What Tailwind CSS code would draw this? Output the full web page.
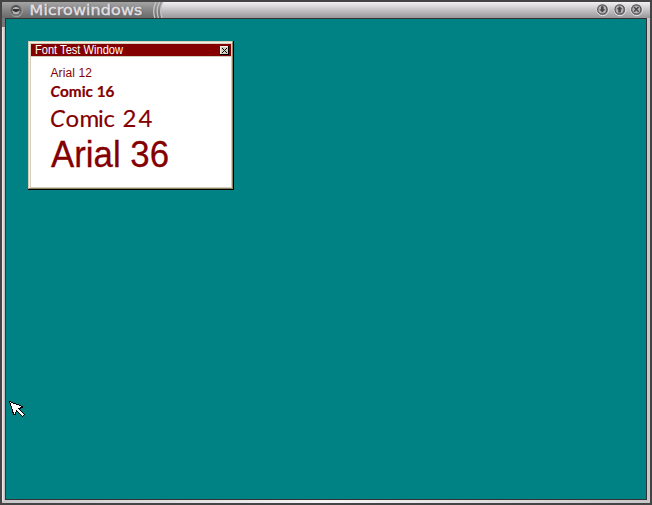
<!DOCTYPE html>
<html lang="en"><head><meta charset="utf-8"><title>Microwindows</title>
<script src="https://cdn.jsdelivr.net/npm/@tailwindcss/browser@4"></script></head>
<body class="w-[652px] h-[505px] overflow-hidden bg-[#444444]">
<main class="relative w-[652px] h-[505px] flex flex-col border-2 border-[#444444] bg-[#e6e2e6] overflow-hidden">
<header class="h-4 shrink-0 flex bg-linear-to-b from-[#f2f0f2] to-[#999799]">
<div class="w-[151px] h-4 flex items-center bg-linear-to-b from-[#a5a5a5] via-[#858585] to-[#696969]">
<svg class="ml-[7px] w-[15px] h-[15px]" viewBox="0 0 15 15"><circle cx="7.4" cy="7.9" r="6.3" fill="#a9a9a9"/><circle cx="7" cy="7.5" r="6.1" fill="#777"/><circle cx="7" cy="7.3" r="4.7" fill="#4a4a4a"/><circle cx="7" cy="7.8" r="3.7" fill="#b5b5b5"/><path d="M3.7 6h6.6v1.7L7 9.3 3.7 7.7z" fill="#333"/></svg>
<svg class="ml-1 w-[120px] h-4" viewBox="0 0 120 16"><text x="2.3" y="13.2" textLength="113" lengthAdjust="spacingAndGlyphs" font-family="DejaVu Sans, sans-serif" font-size="13.5" fill="#555">Microwindows</text><text x="1.5" y="12.5" textLength="113" lengthAdjust="spacingAndGlyphs" font-family="DejaVu Sans, sans-serif" font-size="13.5" fill="#e4e0e4" stroke="#e4e0e4" stroke-width=".35">Microwindows</text></svg>
</div>
<svg class="w-3 h-4" viewBox="0 0 12 16"><defs><linearGradient id="dark" x2="0" y2="1"><stop stop-color="#a0a0a0"/><stop offset="1" stop-color="#6b6b6b"/></linearGradient></defs><path d="M0 0h10Q6 8 9 16H0z" fill="url(#dark)"/><path d="M3 0Q-1 8 2 16M6.5 0Q2.5 8 5.5 16M10 0Q6 8 9 16" fill="none" stroke="#c9c7c9" stroke-width="1.3"/></svg>
<div class="flex-1"></div>
<svg class="w-[53px] h-4 mr-[2px]" viewBox="0 0 53 16"><g fill="#858385" stroke="#e5e3e5"><circle cx="7.7" cy="7.9" r="5.8"/><circle cx="25" cy="7.9" r="5.8"/><circle cx="41.7" cy="7.9" r="5.8"/></g><g fill="#b5b3b5" stroke="#555" stroke-width="1.2"><circle cx="7.3" cy="7.4" r="4.6"/><circle cx="24.6" cy="7.4" r="4.6"/><circle cx="41.3" cy="7.4" r="4.6"/></g><g fill="#484848"><path d="M6 4.2h2.6v3.1h1.7L7.3 10.4 4.3 7.3H6zM23.3 10.4h2.6V7.3h1.7l-3-3.1-3 3.1h1.7z"/><path d="m39 5.1 4.6 4.6M43.6 5.1 39 9.7" stroke="#484848" stroke-width="1.4"/></g></svg>
</header>
<div class="flex-1 flex bg-linear-to-r from-[#c8c6c8] via-[#f5f3f5] to-[#c8c6c8] pb-[2px]">
<div class="w-[3px] shrink-0 bg-linear-to-r from-[#f5f2f5] to-[#b9b5b9]"><div class="h-[9px] bg-[#777777]"></div></div>
<section class="w-[642px] h-[482px] shrink-0 border border-[#333333] bg-[#008284] pl-[22px] pt-[22px]">
<div class="w-[206px] h-[149px] border-r border-b border-black bg-[#d6cebd]">
<div class="h-full border border-t-[#d6cebd] border-l-[#d6cebd] border-r-[#8c8163] border-b-[#8c8163]">
<div class="h-full border-t border-l border-[#f5f1e5] pt-px pl-px pr-px pb-px flex flex-col">
<div class="h-3 shrink-0 bg-[#840000] flex items-center justify-between pr-[2px]">
<svg class="w-[110px] h-3 shrink-0" viewBox="0 0 110 12"><text x="4" y="10" textLength="88" lengthAdjust="spacingAndGlyphs" font-family="Liberation Sans, sans-serif" font-size="12" fill="#fff">Font Test Window</text></svg>
<svg class="w-[9px] h-[9px]" viewBox="0 0 9 9" shape-rendering="crispEdges"><path d="M0 0h9v9H0z" fill="#000"/><path d="M0 0h8v8H0z" fill="#f5f1e5"/><path d="M1 1h7v7H1z" fill="#d6cebd"/><path d="M2 2h1v1H2zM6 2h1v1H6zM3 3h1v1H3zM5 3h1v1H5zM4 4h1v1H4zM3 5h1v1H3zM5 5h1v1H5zM2 6h1v1H2zM6 6h1v1H6z" fill="#000"/></svg>
</div>
<div class="flex-1 mt-px bg-white overflow-hidden">
<svg class="w-[198px] h-[129px]" viewBox="31 57 198 129" fill="#840000"><text x="50.5" y="77" textLength="41.5" lengthAdjust="spacing" font-family="Liberation Sans, sans-serif" font-size="12">Arial 12</text><text x="50.5" y="97" textLength="64" lengthAdjust="spacingAndGlyphs" font-family="Lato, sans-serif" font-size="15.5" font-weight="700" stroke="#840000" stroke-width=".2"><tspan font-style="italic">C</tspan>omic 16</text><text x="50 65.5 79.5 98 103.5 115 122.5 138.5" y="127" font-family="Lato, sans-serif" font-size="24" stroke="#840000" stroke-width=".15"><tspan font-style="italic">C</tspan>omic 24</text><text x="51" y="167" textLength="118" lengthAdjust="spacingAndGlyphs" font-family="Liberation Sans, sans-serif" font-size="36" stroke="#840000" stroke-width=".3">Arial 36</text></svg>
</div></div></div></div>
</section></div>
<svg class="absolute left-[7px] top-[399px] w-[17px] h-[17px]" viewBox="0 0 17 17" shape-rendering="crispEdges"><path d="M.5.5 13.5 5.5v1l-4 1 6 6-2 2-6-6-1 3.5h-2z" fill="#fff" stroke="#000"/></svg>
</main></body></html>
